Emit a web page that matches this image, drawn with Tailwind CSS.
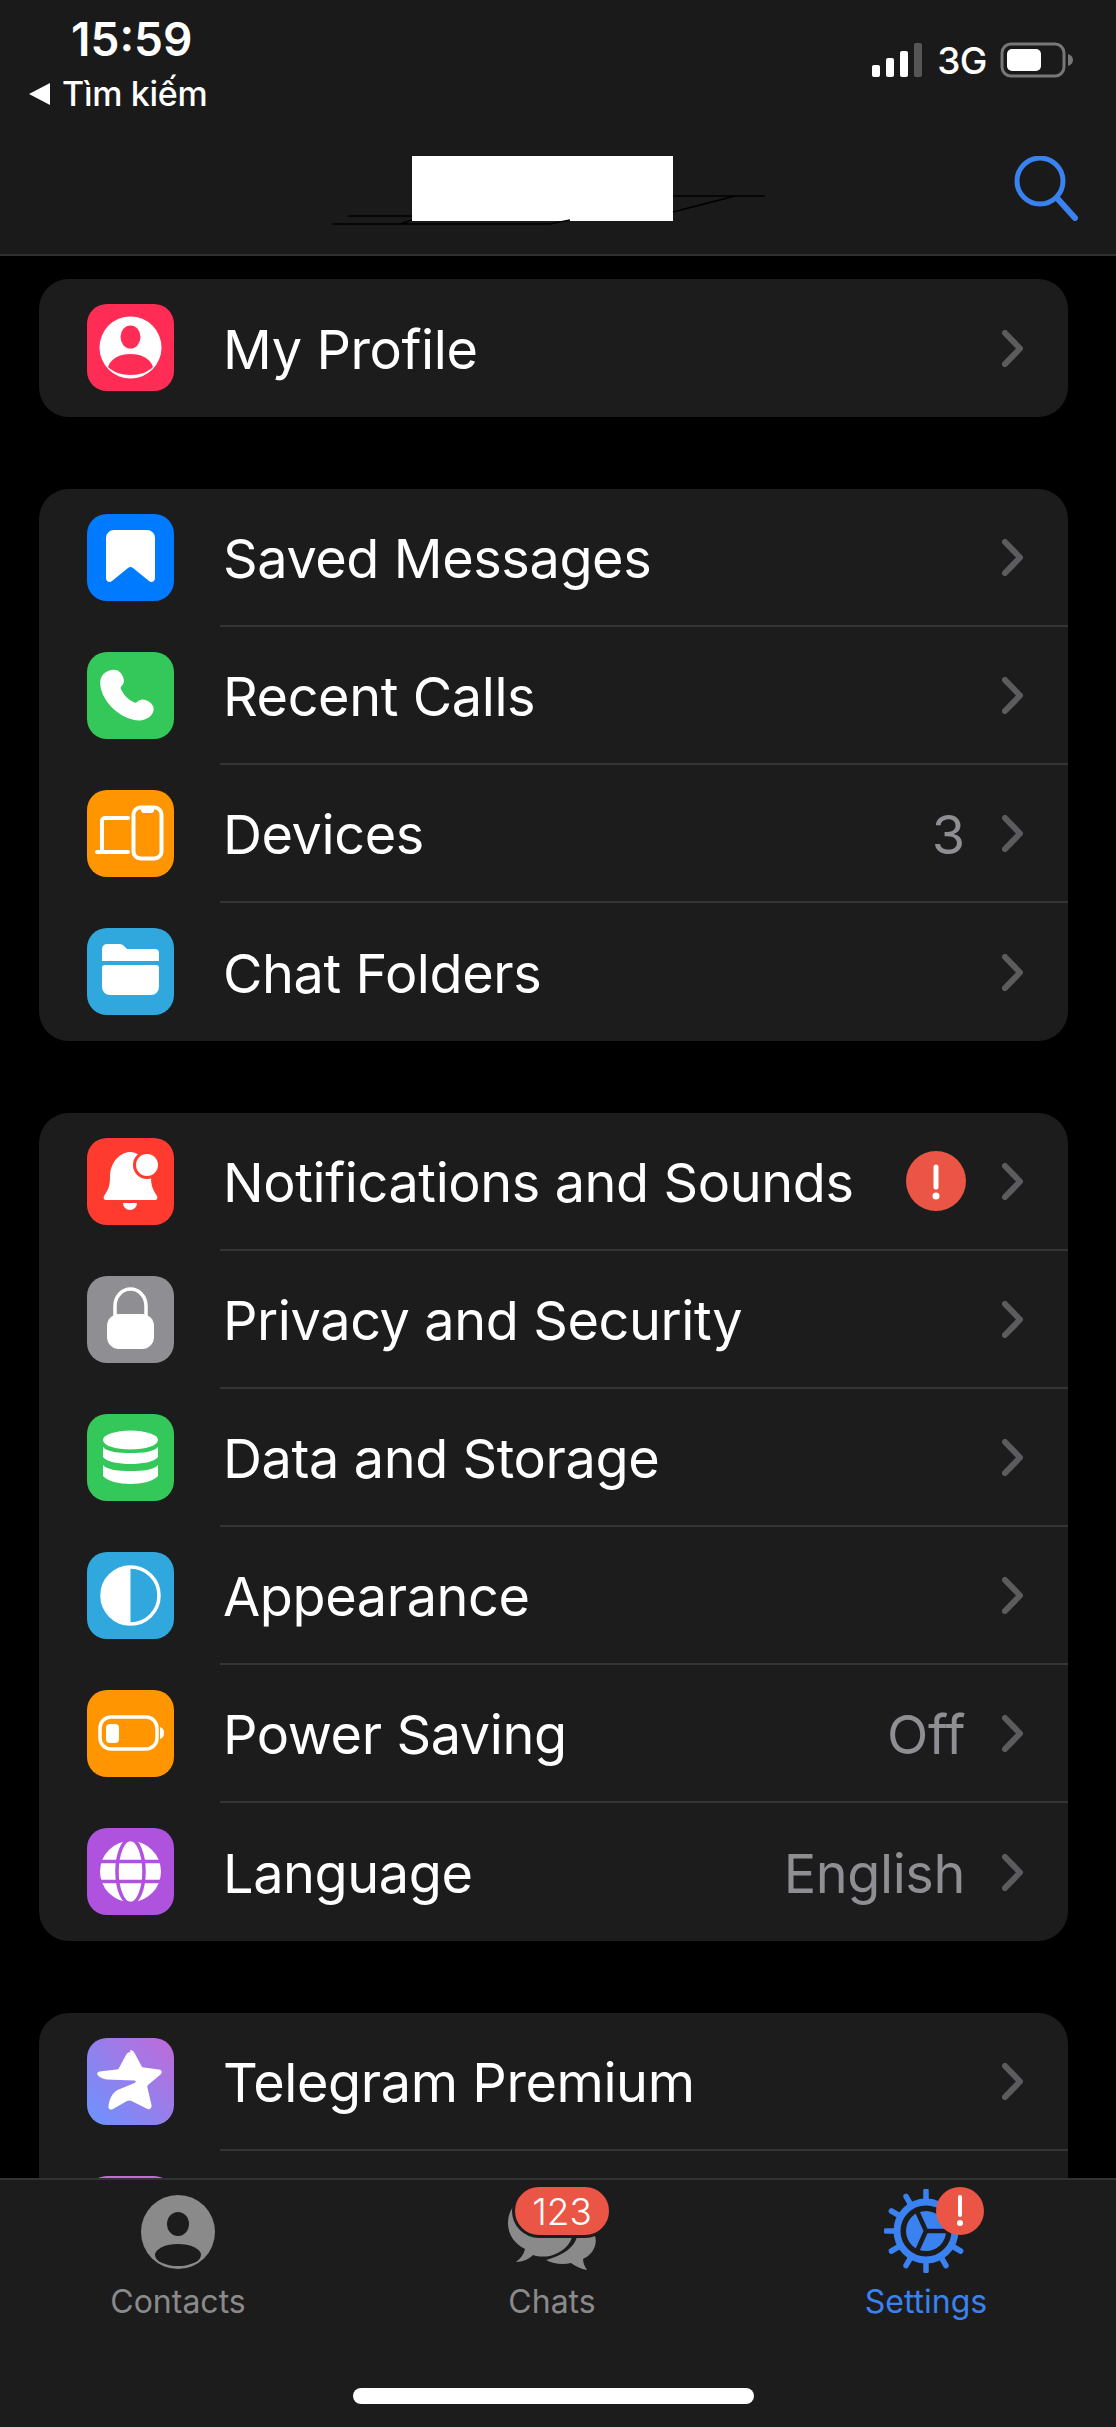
<!DOCTYPE html>
<html lang="en">
<head>
  <meta charset="UTF-8" />
  <title>Settings</title>
  <meta name="viewport" content="width=device-width, initial-scale=1" />
  <script src="https://cdn.jsdelivr.net/npm/@tailwindcss/browser@4"></script>
</head>
<body class="bg-black text-white font-[Inter,sans-serif] w-[1116px] h-[2427px] overflow-hidden flex flex-col">

  <!-- Header -->
  <header class="relative h-[256px] shrink-0 bg-[#1a1a1a] border-b-2 border-[#303030]">
    <div class="flex justify-between pt-[16px]">
      <div class="pl-[29px]">
        <div class="pl-[42px] text-[46px] leading-[46px] font-semibold">15:59</div>
        <div class="flex items-center mt-[12px]">
          <svg width="21" height="22" viewBox="0 0 21 22"><path d="M21 0v22L0 11z" fill="#fff"/></svg>
          <span class="ml-[12px] text-[34px] leading-[40px] font-medium tracking-[-0.3px]">Tìm kiếm</span>
        </div>
      </div>
      <div class="flex items-center h-[34px] mt-[27px] pr-[42px]">
        <svg width="52" height="34" viewBox="0 0 52 34">
          <rect x="0" y="22" width="8" height="12" rx="2" fill="#fff"/>
          <rect x="14" y="15" width="8" height="19" rx="2" fill="#fff"/>
          <rect x="28" y="8" width="8" height="26" rx="2" fill="#fff"/>
          <rect x="42" y="0" width="8" height="34" rx="2" fill="#555"/>
        </svg>
        <span class="ml-[13px] text-[37px] leading-none font-medium tracking-[-0.5px]">3G</span>
        <svg class="ml-[13px]" width="74" height="36" viewBox="0 0 74 36">
          <rect x="2" y="2" width="62" height="32" rx="9" fill="none" stroke="#777" stroke-width="3"/>
          <rect x="7" y="7" width="34" height="22" rx="5" fill="#fff"/>
          <path d="M68 12c3 1 5 3 5 6s-2 5-5 6z" fill="#777"/>
        </svg>
      </div>
    </div>
    <div class="absolute left-[412px] top-[156px] w-[261px] h-[65px] bg-white"></div>
    <svg class="absolute left-0 top-0" width="1116" height="255" viewBox="0 0 1116 255">
      <path d="M332 224H550M348 216H412M400 224L412 220M550 224L570 220M673 196H765M673 212L735 196" fill="none" stroke="#000" stroke-width="1.500"/>
    </svg>
    <svg class="absolute left-[1014px] top-[156px]" width="65" height="65" viewBox="0 0 65 65">
      <circle cx="26" cy="25" r="23" fill="none" stroke="#3a82f0" stroke-width="5"/>
      <path d="M43 42L61 62" fill="none" stroke="#3a82f0" stroke-width="6" stroke-linecap="round"/>
    </svg>
  </header>

  <!-- Settings list -->
  <main class="flex-1 overflow-hidden pt-[23px] pl-[39px] flex flex-col gap-[72px] [&_svg]:shrink-0">

    <section class="bg-[#1c1c1d] rounded-[30px] w-[1029px] shrink-0">
      <div class="flex items-center h-[138px] pl-[48px]">
        <svg class="mr-[46px] -mt-[1px]" width="87" height="87" viewBox="0 0 87 87">
          <rect width="87" height="87" rx="20" fill="#ff2d55"/>
          <circle cx="43.500" cy="43.500" r="31" fill="#fff"/>
          <ellipse cx="43.500" cy="33" rx="10" ry="11.500" fill="#ff2d55"/>
          <path d="M21 63c3-9 12-13 22.500-13S63 54 66 63c-5 5-13 8-22.500 8S26 68 21 63z" fill="#ff2d55"/>
        </svg>
        <div class="flex-1 h-full flex items-center pl-[3px] pr-[45px]">
          <span class="flex-1 pt-[3px] text-[54px] tracking-[-0.4px]">My Profile</span>
          <svg width="21" height="37" viewBox="0 0 21 37"><path d="M3 3L18 18.500L3 34" fill="none" stroke="#5c5c5e" stroke-width="6" stroke-linecap="round" stroke-linejoin="round"/></svg>
        </div>
      </div>
    </section>

    <section class="bg-[#1c1c1d] rounded-[30px] w-[1029px] shrink-0">
      <div class="flex items-center h-[138px] pl-[48px]">
        <svg class="mr-[46px] -mt-[1px]" width="87" height="87" viewBox="0 0 87 87">
          <rect width="87" height="87" rx="20" fill="#007aff"/>
          <path d="M27 16h33a8 8 0 0 1 8 8v40c0 4-4 5-6 3L46 54a4 4 0 0 0-5 0L25 67c-2 2-6 1-6-3V24a8 8 0 0 1 8-8z" fill="#fff"/>
        </svg>
        <div class="flex-1 h-full flex items-center border-b-2 border-[#353537] pl-[3px] pr-[45px]">
          <span class="flex-1 pt-[3px] text-[54px] tracking-[-0.4px]">Saved Messages</span>
          <svg width="21" height="37" viewBox="0 0 21 37"><path d="M3 3L18 18.500L3 34" fill="none" stroke="#5c5c5e" stroke-width="6" stroke-linecap="round" stroke-linejoin="round"/></svg>
        </div>
      </div>
      <div class="flex items-center h-[138px] pl-[48px]">
        <svg class="mr-[46px] -mt-[1px]" width="87" height="87" viewBox="0 0 87 87">
          <rect width="87" height="87" rx="20" fill="#34c759"/>
          <path d="M24 15c5-1 9 3 11 8 1.500 4 1 7-2 10-1 1-1 2 0 4 3 6 7 10 13 13 2 1 3 1 4 0 3-3 6-3.500 10-2 5 2 9 6 8 11-1 6-8 11-15 11-12 0-24-7-32-16-7-8-11-17-11-25 0-7 5-13 14-14z" fill="#fff" transform="translate(4 4) scale(.92)"/>
        </svg>
        <div class="flex-1 h-full flex items-center border-b-2 border-[#353537] pl-[3px] pr-[45px]">
          <span class="flex-1 pt-[3px] text-[54px] tracking-[-0.4px]">Recent Calls</span>
          <svg width="21" height="37" viewBox="0 0 21 37"><path d="M3 3L18 18.500L3 34" fill="none" stroke="#5c5c5e" stroke-width="6" stroke-linecap="round" stroke-linejoin="round"/></svg>
        </div>
      </div>
      <div class="flex items-center h-[138px] pl-[48px]">
        <svg class="mr-[46px] -mt-[1px]" width="87" height="87" viewBox="0 0 87 87">
          <rect width="87" height="87" rx="20" fill="#ff9500"/>
          <path d="M15 60V31a3 3 0 0 1 3-3H41M10 62H41" fill="none" stroke="#fff" stroke-width="4" stroke-linecap="round"/>
          <rect x="46.500" y="17.500" width="28" height="51" rx="7" fill="none" stroke="#fff" stroke-width="4"/>
          <path d="M54 18h13v2a3 3 0 0 1-3 3h-7a3 3 0 0 1-3-3z" fill="#fff"/>
        </svg>
        <div class="flex-1 h-full flex items-center border-b-2 border-[#353537] pl-[3px] pr-[45px]">
          <span class="flex-1 pt-[3px] text-[54px] tracking-[-0.4px]">Devices</span>
          <span class="pt-[3px] text-[54px] text-[#8e8e93] mr-[37px]">3</span>
          <svg width="21" height="37" viewBox="0 0 21 37"><path d="M3 3L18 18.500L3 34" fill="none" stroke="#5c5c5e" stroke-width="6" stroke-linecap="round" stroke-linejoin="round"/></svg>
        </div>
      </div>
      <div class="flex items-center h-[138px] pl-[48px]">
        <svg class="mr-[46px] -mt-[1px]" width="87" height="87" viewBox="0 0 87 87">
          <rect width="87" height="87" rx="20" fill="#30a8de"/>
          <path d="M20 16h12c3 0 4 1 6 3l2 2h28a4 4 0 0 1 4 4v8H15V21a5 5 0 0 1 5-5z" fill="#fff"/>
          <path d="M18 37h51a3 3 0 0 1 3 3v19a8 8 0 0 1-8 8H23a8 8 0 0 1-8-8V40a3 3 0 0 1 3-3z" fill="#fff"/>
        </svg>
        <div class="flex-1 h-full flex items-center pl-[3px] pr-[45px]">
          <span class="flex-1 pt-[3px] text-[54px] tracking-[-0.4px]">Chat Folders</span>
          <svg width="21" height="37" viewBox="0 0 21 37"><path d="M3 3L18 18.500L3 34" fill="none" stroke="#5c5c5e" stroke-width="6" stroke-linecap="round" stroke-linejoin="round"/></svg>
        </div>
      </div>
    </section>

    <section class="bg-[#1c1c1d] rounded-[30px] w-[1029px] shrink-0">
      <div class="flex items-center h-[138px] pl-[48px]">
        <svg class="mr-[46px] -mt-[1px]" width="87" height="87" viewBox="0 0 87 87">
          <rect width="87" height="87" rx="20" fill="#ff3b30"/>
          <path d="M43 14c-12 1-20 12-20 25 0 9-2 13-6 19-1 2 0 4 2 4h49c2 0 3-2 2-4-4-6-6-10-6-19 0-12-8-24-21-25z" fill="#fff"/>
          <path d="M36 65h14a7 7 0 0 1-14 0z" fill="#fff"/>
          <circle cx="60" cy="27" r="14" fill="#ff3b30"/>
          <circle cx="60" cy="27" r="11" fill="#fff"/>
        </svg>
        <div class="flex-1 h-full flex items-center border-b-2 border-[#353537] pl-[3px] pr-[45px]">
          <span class="flex-1 pt-[3px] text-[54px] tracking-[-0.4px]">Notifications and Sounds</span>
          <svg class="mr-[36px]" width="60" height="60" viewBox="0 0 60 60">
            <circle cx="30" cy="30" r="30" fill="#eb5545"/>
            <path d="M30 16V36" stroke="#fff" stroke-width="5" stroke-linecap="round"/>
            <circle cx="30" cy="45" r="3.500" fill="#fff"/>
          </svg>
          <svg width="21" height="37" viewBox="0 0 21 37"><path d="M3 3L18 18.500L3 34" fill="none" stroke="#5c5c5e" stroke-width="6" stroke-linecap="round" stroke-linejoin="round"/></svg>
        </div>
      </div>
      <div class="flex items-center h-[138px] pl-[48px]">
        <svg class="mr-[46px] -mt-[1px]" width="87" height="87" viewBox="0 0 87 87">
          <rect width="87" height="87" rx="20" fill="#8e8e93"/>
          <path d="M28 42V30a15.500 17 0 0 1 31 0V42" fill="none" stroke="#fff" stroke-width="3.500"/>
          <rect x="20" y="38" width="47" height="35" rx="12" fill="#fff"/>
        </svg>
        <div class="flex-1 h-full flex items-center border-b-2 border-[#353537] pl-[3px] pr-[45px]">
          <span class="flex-1 pt-[3px] text-[54px] tracking-[-0.4px]">Privacy and Security</span>
          <svg width="21" height="37" viewBox="0 0 21 37"><path d="M3 3L18 18.500L3 34" fill="none" stroke="#5c5c5e" stroke-width="6" stroke-linecap="round" stroke-linejoin="round"/></svg>
        </div>
      </div>
      <div class="flex items-center h-[138px] pl-[48px]">
        <svg class="mr-[46px] -mt-[1px]" width="87" height="87" viewBox="0 0 87 87">
          <rect width="87" height="87" rx="20" fill="#34c759"/>
          <ellipse cx="43.500" cy="26" rx="27.500" ry="9.500" fill="#fff"/>
          <path d="M16 33c4 5 16 6 27.500 6S67 38 71 33v10c-4 5-16 7-27.500 7S20 48 16 43z" fill="#fff"/>
          <path d="M16 51c4 5 16 6 27.500 6S67 56 71 51v11c-4 5-16 8-27.500 8S20 67 16 62z" fill="#fff"/>
        </svg>
        <div class="flex-1 h-full flex items-center border-b-2 border-[#353537] pl-[3px] pr-[45px]">
          <span class="flex-1 pt-[3px] text-[54px] tracking-[-0.4px]">Data and Storage</span>
          <svg width="21" height="37" viewBox="0 0 21 37"><path d="M3 3L18 18.500L3 34" fill="none" stroke="#5c5c5e" stroke-width="6" stroke-linecap="round" stroke-linejoin="round"/></svg>
        </div>
      </div>
      <div class="flex items-center h-[138px] pl-[48px]">
        <svg class="mr-[46px] -mt-[1px]" width="87" height="87" viewBox="0 0 87 87">
          <rect width="87" height="87" rx="20" fill="#30a8de"/>
          <circle cx="43.500" cy="43.500" r="28.500" fill="none" stroke="#fff" stroke-width="3.500"/>
          <path d="M43.500 15a28.500 28.500 0 0 0 0 57z" fill="#fff"/>
        </svg>
        <div class="flex-1 h-full flex items-center border-b-2 border-[#353537] pl-[3px] pr-[45px]">
          <span class="flex-1 pt-[3px] text-[54px] tracking-[-0.4px]">Appearance</span>
          <svg width="21" height="37" viewBox="0 0 21 37"><path d="M3 3L18 18.500L3 34" fill="none" stroke="#5c5c5e" stroke-width="6" stroke-linecap="round" stroke-linejoin="round"/></svg>
        </div>
      </div>
      <div class="flex items-center h-[138px] pl-[48px]">
        <svg class="mr-[46px] -mt-[1px]" width="87" height="87" viewBox="0 0 87 87">
          <rect width="87" height="87" rx="20" fill="#ff9500"/>
          <rect x="13" y="27" width="57" height="32" rx="11" fill="none" stroke="#fff" stroke-width="3.500"/>
          <rect x="19" y="34" width="13" height="19" rx="4" fill="#fff"/>
          <path d="M73 37c3 1 4 3 4 6s-1 5-4 6z" fill="#fff"/>
        </svg>
        <div class="flex-1 h-full flex items-center border-b-2 border-[#353537] pl-[3px] pr-[45px]">
          <span class="flex-1 pt-[3px] text-[54px] tracking-[-0.4px]">Power Saving</span>
          <span class="pt-[3px] text-[54px] text-[#8e8e93] tracking-[-0.4px] mr-[37px]">Off</span>
          <svg width="21" height="37" viewBox="0 0 21 37"><path d="M3 3L18 18.500L3 34" fill="none" stroke="#5c5c5e" stroke-width="6" stroke-linecap="round" stroke-linejoin="round"/></svg>
        </div>
      </div>
      <div class="flex items-center h-[138px] pl-[48px]">
        <svg class="mr-[46px] -mt-[1px]" width="87" height="87" viewBox="0 0 87 87">
          <rect width="87" height="87" rx="20" fill="#af52de"/>
          <circle cx="43.500" cy="43.500" r="30.500" fill="#fff"/>
          <g fill="none" stroke="#af52de" stroke-width="3.500">
            <ellipse cx="43.500" cy="43.500" rx="13.500" ry="32"/>
            <path d="M10 33.500H77M10 53.500H77"/>
          </g>
        </svg>
        <div class="flex-1 h-full flex items-center pl-[3px] pr-[45px]">
          <span class="flex-1 pt-[3px] text-[54px] tracking-[-0.4px]">Language</span>
          <span class="pt-[3px] text-[54px] text-[#8e8e93] tracking-[-0.4px] mr-[37px]">English</span>
          <svg width="21" height="37" viewBox="0 0 21 37"><path d="M3 3L18 18.500L3 34" fill="none" stroke="#5c5c5e" stroke-width="6" stroke-linecap="round" stroke-linejoin="round"/></svg>
        </div>
      </div>
    </section>

    <section class="bg-[#1c1c1d] rounded-t-[30px] w-[1029px] shrink-0">
      <div class="flex items-center h-[138px] pl-[48px]">
        <svg class="mr-[46px] -mt-[1px]" width="87" height="87" viewBox="0 0 87 87">
          <defs>
            <linearGradient id="premium" x1="1" y1="0" x2="0" y2="1">
              <stop offset="0" stop-color="#c06ad8"/>
              <stop offset="1" stop-color="#6a94ff"/>
            </linearGradient>
          </defs>
          <rect width="87" height="87" rx="20" fill="url(#premium)"/>
          <path d="M43 12c2 0 3.500 1 4.500 3l7 13c.5 1 1.500 1.500 2.500 1.500l15 2c3 .5 3.500 3 1.500 5l-12 10c-1 1-1.500 2-1 3.500l4 17c.5 3-1.500 5-4 4l-16-8c-1.500-.8-3-.8-4.500 0l-14 8c-3 1.500-5 0-4.500-3 1-8 4-13 9-16l17-7c2-1 1.500-2.500-.5-2.500l-27-1c-4-.5-7-2-9-4-1.500-1.500-1-3.500 1.500-4l17-2c1 0 2-.5 2.500-1.500l7-13c1-2 2.500-3 4.500-3z" fill="#fff"/>
        </svg>
        <div class="flex-1 h-full flex items-center border-b-2 border-[#353537] pl-[3px] pr-[45px]">
          <span class="flex-1 pt-[3px] text-[54px] tracking-[-0.4px]">Telegram Premium</span>
          <svg width="21" height="37" viewBox="0 0 21 37"><path d="M3 3L18 18.500L3 34" fill="none" stroke="#5c5c5e" stroke-width="6" stroke-linecap="round" stroke-linejoin="round"/></svg>
        </div>
      </div>
      <div class="h-[138px] pl-[48px] pt-[25px]">
        <div class="w-[87px] h-[87px] rounded-[20px] bg-[#c56bd6]"></div>
      </div>
    </section>
  </main>

  <!-- Tab bar -->
  <nav class="relative z-10 h-[249px] shrink-0 bg-[#1c1c1d] border-t-2 border-[#333335]">
    <div class="grid grid-cols-[374px_374px_374px] -ml-[9px]">
      <div class="flex flex-col items-center">
        <svg class="mt-[14px]" width="74" height="76" viewBox="0 0 74 76">
          <circle cx="37" cy="38" r="37" fill="#8a8a8a"/>
          <ellipse cx="37" cy="30" rx="11" ry="12" fill="#1c1c1d"/>
          <ellipse cx="37" cy="61" rx="23" ry="11" fill="#1c1c1d"/>
        </svg>
        <span class="mt-[14px] text-[32px] leading-[36px] text-[#8a8a8a]">Contacts</span>
      </div>
      <div class="relative flex flex-col items-center">
        <svg class="mt-[10px]" width="90" height="80" viewBox="12 10 90 80">
          <path d="M30 20C18 22 13 33 13 43c0 12 7 21 17 26-1 5-4 9-9 13 7 0 13-3 17-7 6 2 14 2 20 0 12-4 20-13 20-25V20z" fill="#8a8a8a"/>
          <path d="M82 56h18c2 6 0 14-6 19-3 3-5 3-6 4 0 4 2 8 4 11-6-1-12-4-16-7-8 2-18 1-25-3 15-4 29-12 31-24z" fill="#8a8a8a"/>
        </svg>
        <span class="mt-[14px] text-[32px] leading-[36px] text-[#8a8a8a]">Chats</span>
        <div class="absolute left-[147px] top-[4px] w-[100px] h-[54px] rounded-full bg-[#eb5545] border-[3px] border-[#1c1c1d] flex items-center justify-center text-[37px] font-light leading-none">123</div>
      </div>
      <div class="relative flex flex-col items-center">
        <svg class="mt-[9px]" width="84" height="84" viewBox="0 0 84 84">
          <path d="M42 2V12M62 7.400L57 16M76.600 22L68 27M82 42H72M76.600 62L68 57M62 76.600L57 68M42 82V72M22 76.600L27 68M7.400 62L16 57M2 42H12M7.400 22L16 27M22 7.400L27 16" fill="none" stroke="#3a82f0" stroke-width="5.500" stroke-linecap="round"/>
          <circle cx="42" cy="42" r="29" fill="none" stroke="#3a82f0" stroke-width="7"/>
          <circle cx="42" cy="42" r="20" fill="#3a82f0"/>
          <path d="M42 42L33 22M42 42L33 62M42 42H63" fill="none" stroke="#1c1c1d" stroke-width="4.500"/>
        </svg>
        <span class="mt-[11px] text-[32px] leading-[36px] text-[#3a82f0]">Settings</span>
        <div class="absolute left-[197px] top-[7px] w-[48px] h-[48px] rounded-full bg-[#eb5545] flex items-center justify-center">
          <svg width="8" height="32" viewBox="0 0 8 32">
            <path d="M4 2V20" stroke="#fff" stroke-width="4" stroke-linecap="round"/>
            <circle cx="4" cy="28" r="3" fill="#fff"/>
          </svg>
        </div>
      </div>
    </div>
    <div class="absolute left-[353px] top-[208px] w-[401px] h-[16px] rounded-full bg-white"></div>
  </nav>

</body>
</html>
